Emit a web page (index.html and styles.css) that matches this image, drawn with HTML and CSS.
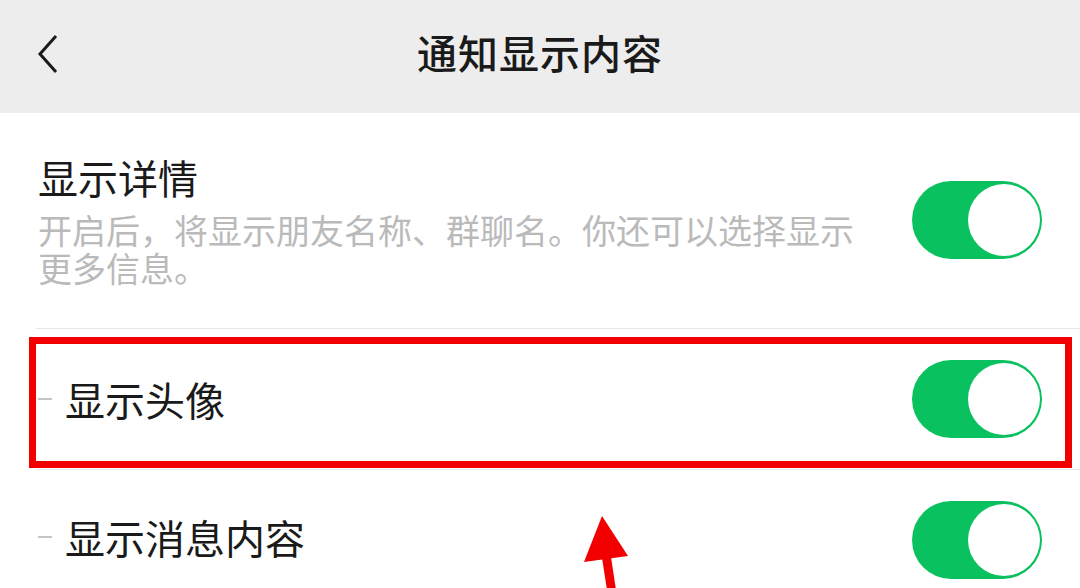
FILE: index.html
```html
<!DOCTYPE html>
<html lang="zh-CN">
<head>
    <meta charset="UTF-8">
    <meta name="viewport" content="width=device-width, initial-scale=1.0">
    <title>通知显示内容</title>
    <link rel="stylesheet" href="styles.css">
</head>
<body>
    <header class="topbar">
        <div class="back">
            <svg width="24" height="40" viewBox="0 0 24 40">
                <path d="M20 2 L4 20 L20 38" fill="none" stroke="#1a1a1a" stroke-width="3" stroke-linejoin="miter"/>
            </svg>
        </div>
        <div class="title">通知显示内容</div>
        <div></div>
    </header>

    <div class="list">
        <div class="row row-detail">
            <div class="text">
                <div class="label">显示详情</div>
                <div class="desc">开启后，将显示朋友名称、群聊名。你还可以选择显示更多信息。</div>
            </div>
            <div class="switch"><span class="knob"></span></div>
        </div>
        <div class="row">
            <div class="label"><span class="dash"></span>显示头像</div>
            <div class="switch"><span class="knob"></span></div>
        </div>
        <div class="row row-last">
            <div class="label"><span class="dash"></span>显示消息内容</div>
            <div class="switch"><span class="knob"></span></div>
        </div>
    </div>

    <!-- annotation overlay -->
    <div class="highlight"></div>
    <svg class="arrow" width="60" height="80" viewBox="0 0 60 80">
        <polygon points="22,6 4,52 48,46" fill="#f20000"/>
        <polygon points="22,48 31,47 36,80 27,80" fill="#f20000"/>
    </svg>
</body>
</html>
```

FILE: styles.css
```css
body {
    margin: 0;
    width: 1080px;
    height: 588px;
    overflow: hidden;
    position: relative;
    background: #fff;
    font-family: "Noto Sans CJK SC", "Noto Sans", sans-serif;
    color: #1a1a1a;
}
.topbar {
    height: 113px;
    padding-bottom: 10px;
    box-sizing: border-box;
    background: #ededed;
    display: grid;
    grid-template-columns: 1fr auto 1fr;
    align-items: center;
}
.back {
    padding-left: 36px;
    padding-top: 4px;
    display: flex;
    align-items: center;
}
.title {
    font-size: 40px;
    font-weight: 500;
    letter-spacing: 1px;
}
.row {
    margin-left: 36px;
    padding: 0 38px 0 2px;
    height: 140px;
    display: flex;
    align-items: center;
    justify-content: space-between;
    border-bottom: 1px solid #e8e8e8;
}
.row-detail {
    height: auto;
    padding-top: 40px;
    padding-bottom: 41px;
}
.row-last .label {
    margin-top: -6px;
}
.label {
    font-size: 40px;
    line-height: 48px;
    display: flex;
    align-items: center;
}
.desc {
    margin-top: 10px;
    max-width: 820px;
    font-size: 34px;
    line-height: 38px;
    color: #bababa;
}
.dash {
    width: 14px;
    height: 2px;
    background: #c4c4c4;
    margin-right: 13px;
}
.switch {
    width: 130px;
    height: 78px;
    border-radius: 39px;
    background: #0ac160;
    display: flex;
    justify-content: flex-end;
    align-items: center;
    padding: 2px;
    box-sizing: border-box;
    flex-shrink: 0;
}
.knob {
    width: 72px;
    height: 72px;
    border-radius: 50%;
    background: #fff;
}
.highlight {
    position: absolute;
    left: 29px;
    top: 337px;
    width: 1043px;
    height: 131px;
    border: 7px solid #f20000;
    box-sizing: border-box;
}
.arrow {
    position: absolute;
    left: 580px;
    top: 510px;
}
```
